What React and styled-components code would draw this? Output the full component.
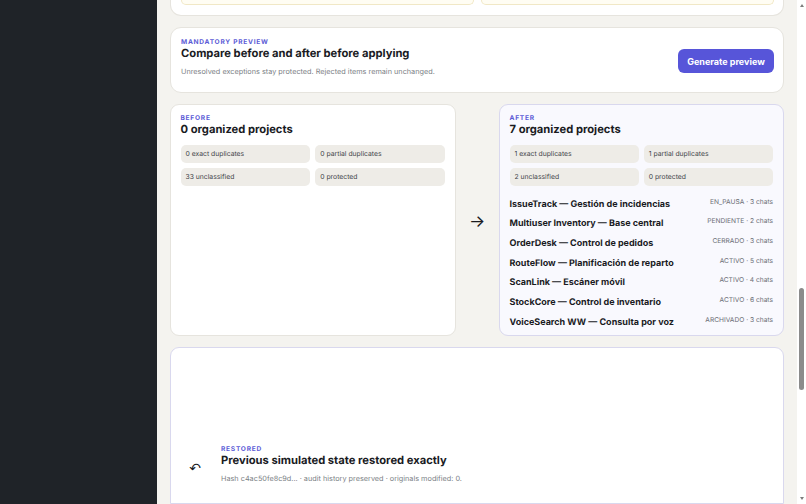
import React from "react";
import styled, { createGlobalStyle } from "styled-components";

const Color = {
  Accent: "#5b5bd6",
  Ink: "#1a1b1f",
  Muted: "#7c7f86",
  Page: "#f4f3ef",
  Line: "#e6e4de",
  Lavender: "#d9d8ee",
  Chip: "#eeece7",
};

const Global = createGlobalStyle`
  html, body {
    margin: 0;
    height: 100%;
    overflow: hidden;
    font-family: Inter, "Noto Sans", sans-serif;
    color: ${Color.Ink};
    text-rendering: geometricPrecision;
  }
`;

const Shell = styled.div`
  display: flex;
  width: 806px;
  height: 504px;
  overflow: hidden;
`;

const Sidebar = styled.aside`
  flex: 0 0 157px;
  background: #1f2328;
`;

const Main = styled.main`
  flex: 1;
  min-width: 0;
  display: flex;
  flex-direction: column;
  gap: 11px;
  padding: 0 13px;
  background: ${Color.Page};
  overflow: hidden;
`;

const ScrollTrack = styled.div`
  flex: 0 0 9px;
  display: flex;
  flex-direction: column;
  align-items: center;
  background: #fff;
  padding: 4px 0 4px;
`;

const Thumb = styled.div`
  width: 5px;
  height: 102px;
  margin: 281px 0 auto;
  border-radius: 3px;
  background: #8b8b8b;
`;

const ScrollArrow = styled.div`
  width: 0;
  height: 0;
  border-left: 2.5px solid transparent;
  border-right: 2.5px solid transparent;
  ${({ $down }) =>
    $down
      ? "border-top: 3px solid #7d7d7d;"
      : "border-bottom: 3px solid #7d7d7d;"}
`;

const CutCard = styled.section`
  flex: 0 0 16px;
  box-sizing: border-box;
  display: grid;
  grid-template-columns: 1fr 1fr;
  gap: 7px;
  align-items: start;
  padding: 0 9px 0 10px;
  background: #fff;
  border: 1px solid ${Color.Line};
  border-top: none;
  border-radius: 0 0 11px 11px;
`;

const WarnBox = styled.div`
  height: 5px;
  box-sizing: border-box;
  background: #fffdf3;
  border: 1px solid #f1e8c6;
  border-top: none;
  border-radius: 0 0 6px 6px;
`;

const PreviewCard = styled.section`
  flex: 0 0 66px;
  box-sizing: border-box;
  display: flex;
  align-items: flex-start;
  justify-content: space-between;
  padding: 11px 9px 0 10px;
  background: #fff;
  border: 1px solid ${Color.Line};
  border-radius: 11px;
`;

const Eyebrow = styled.div`
  font-size: 6.6px;
  line-height: 7px;
  font-weight: 700;
  letter-spacing: 0.75px;
  text-transform: uppercase;
  color: ${Color.Accent};
`;

const Title = styled.h2`
  margin: 0;
  font-size: 11.2px;
  line-height: 14px;
  font-weight: 700;
  color: ${Color.Ink};
`;

const Note = styled.p`
  margin: 6.5px 0 0;
  font-size: 7.3px;
  line-height: 10px;
  color: ${Color.Muted};
`;

const PrimaryButton = styled.button`
  width: 96px;
  height: 24px;
  margin-top: 10px;
  padding: 0;
  border: none;
  border-radius: 6px;
  background: #5755d9;
  color: #fff;
  font: 700 9px Inter, sans-serif;
`;

const CompareGrid = styled.div`
  flex: 0 0 232px;
  display: grid;
  grid-template-columns: 286px 1fr 285px;
`;

const Panel = styled.section`
  box-sizing: border-box;
  padding: 10px 10px 0 9.5px;
  background: ${({ $after }) => ($after ? "#f9f9fe" : "#fff")};
  border: 1px solid ${({ $after }) => ($after ? Color.Lavender : Color.Line)};
  border-radius: 9px;
`;

const ArrowCell = styled.div`
  display: flex;
  align-items: center;
  justify-content: center;
  padding: 3px 1px 0 0;
  font-size: 17px;
  color: ${Color.Ink};
`;

const Stats = styled.div`
  display: grid;
  grid-template-columns: 1fr 1fr;
  gap: 5px;
  margin-top: 9px;
`;

const Stat = styled.div`
  height: 18px;
  padding-left: 5px;
  border-radius: 5px;
  background: ${Color.Chip};
  font-size: 6.8px;
  line-height: 18px;
  color: #43454a;
`;

const ProjectList = styled.ul`
  list-style: none;
  margin: 8.6px 0 0;
  padding: 0;
`;

const ProjectRow = styled.li`
  display: flex;
  justify-content: space-between;
  height: 19.7px;
  line-height: 19.7px;
`;

const ProjectName = styled.span`
  font-size: 9px;
  font-weight: 700;
  color: ${Color.Ink};
`;

const ProjectMeta = styled.span`
  font-size: 6.65px;
  line-height: 15.6px;
  color: #6c6f76;
`;

const RestoredCard = styled.section`
  flex: 1;
  min-height: 0;
  display: flex;
  align-items: flex-start;
  gap: 19px;
  padding: 98px 0 0 17px;
  background: #fff;
  border: 1px solid ${Color.Lavender};
  border-radius: 9px 9px 0 0;
`;

const RestoredIcon = styled.div`
  width: 14px;
  margin-top: 15px;
  font-family: "DejaVu Sans", sans-serif;
  font-size: 14px;
  line-height: 16px;
  text-align: center;
  color: ${Color.Ink};
`;

const before = ["0 exact duplicates", "0 partial duplicates", "33 unclassified", "0 protected"];
const after = ["1 exact duplicates", "1 partial duplicates", "2 unclassified", "0 protected"];

const projects = [
  ["IssueTrack — Gestión de incidencias", "EN_PAUSA · 3 chats"],
  ["Multiuser Inventory — Base central", "PENDIENTE · 2 chats"],
  ["OrderDesk — Control de pedidos", "CERRADO · 3 chats"],
  ["RouteFlow — Planificación de reparto", "ACTIVO · 5 chats"],
  ["ScanLink — Escáner móvil", "ACTIVO · 4 chats"],
  ["StockCore — Control de inventario", "ACTIVO · 6 chats"],
  ["VoiceSearch WW — Consulta por voz", "ARCHIVADO · 3 chats"],
];

export default function App() {
  return (
    <Shell>
      <Global />
      <Sidebar />
      <Main>
        <CutCard>
          <WarnBox />
          <WarnBox />
        </CutCard>

        <PreviewCard>
          <div>
            <Eyebrow>Mandatory preview</Eyebrow>
            <Title>Compare before and after before applying</Title>
            <Note>Unresolved exceptions stay protected. Rejected items remain unchanged.</Note>
          </div>
          <PrimaryButton>Generate preview</PrimaryButton>
        </PreviewCard>

        <CompareGrid>
          <Panel>
            <Eyebrow>Before</Eyebrow>
            <Title>0 organized projects</Title>
            <Stats>
              {before.map((s) => (
                <Stat key={s}>{s}</Stat>
              ))}
            </Stats>
          </Panel>
          <ArrowCell>→</ArrowCell>
          <Panel $after>
            <Eyebrow>After</Eyebrow>
            <Title>7 organized projects</Title>
            <Stats>
              {after.map((s) => (
                <Stat key={s}>{s}</Stat>
              ))}
            </Stats>
            <ProjectList>
              {projects.map(([name, meta]) => (
                <ProjectRow key={name}>
                  <ProjectName>{name}</ProjectName>
                  <ProjectMeta>{meta}</ProjectMeta>
                </ProjectRow>
              ))}
            </ProjectList>
          </Panel>
        </CompareGrid>

        <RestoredCard>
          <RestoredIcon>↶</RestoredIcon>
          <div>
            <Eyebrow>Restored</Eyebrow>
            <Title>Previous simulated state restored exactly</Title>
            <Note>Hash c4ac50fe8c9d... · audit history preserved · originals modified: 0.</Note>
          </div>
        </RestoredCard>
      </Main>
      <ScrollTrack>
        <ScrollArrow />
        <Thumb />
        <ScrollArrow $down />
      </ScrollTrack>
    </Shell>
  );
}
